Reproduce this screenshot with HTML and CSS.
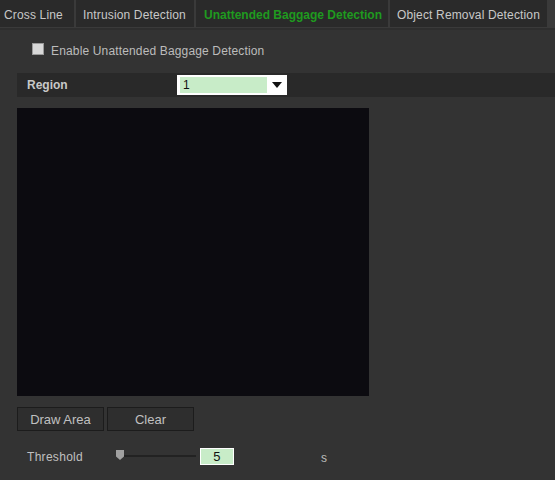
FILE: index.html
```html
<!DOCTYPE html>
<html>
<head>
<meta charset="utf-8">
<link rel="stylesheet" href="styles.css">
</head>
<body>
<div class="tabs">
  <div class="tab t1">Cross Line</div>
  <div class="tab t2">Intrusion Detection</div>
  <div class="tab t3 active">Unattended Baggage Detection</div>
  <div class="tab t4">Object Removal Detection</div>
</div>
<div class="content">
  <label class="enable"><span class="checkbox"></span>Enable Unattended Baggage Detection</label>
  <div class="region-row">
    <span class="region-label">Region</span>
    <div class="select">
      <span class="select-value">1</span>
      <span class="select-arrow"></span>
    </div>
  </div>
  <div class="canvas"></div>
  <div class="buttons">
    <button class="btn">Draw Area</button>
    <button class="btn">Clear</button>
  </div>
  <div class="threshold-row">
    <span class="th-label">Threshold</span>
    <div class="slider">
      <div class="track"></div>
      <div class="handle"></div>
    </div>
    <div class="num">5</div>
    <span class="unit">s</span>
  </div>
</div>
</body>
</html>
```
FILE: styles.css
```css
html, body {
  margin: 0;
  padding: 0;
  background: #333333;
  font-family: "Liberation Sans", Arial, sans-serif;
  font-size: 12px;
  letter-spacing: 0.15px;
  color: #c8c8c8;
  width: 555px;
  height: 480px;
  overflow: hidden;
}
.tabs {
  display: flex;
  gap: 2px;
  height: 30px;
  background: #3a3a3a;
  border-bottom: 2px solid #2e2e2e;
  box-sizing: border-box;
}
.tab {
  background: #2a2a2a;
  line-height: 30px;
  height: 27px;
  color: #c8c8c8;
  font-size: 12px;
  white-space: nowrap;
  box-sizing: border-box;
  overflow: hidden;
}
.t1 { width: 74px; padding-left: 4px; }
.t2 { width: 118px; padding-left: 7px; }
.t3 { width: 192px; padding-left: 8px; }
.t4 { width: 157px; padding-left: 7px; }
.tab.active {
  color: #1f9a1f;
  font-weight: bold;
  letter-spacing: 0;
}
.content {
  padding: 13px 0 0 17px;
}
.enable {
  display: flex;
  align-items: center;
  margin-left: 15px;
  height: 16px;
  color: #bcbcbc;
  font-size: 12px;
}
.checkbox {
  width: 10px;
  height: 10px;
  background: #d8d8d8;
  border: 1px solid #9a9a9a;
  margin-right: 7px;
  margin-top: -4px;
}
.region-row {
  margin-top: 14px;
  height: 24px;
  background: #292929;
  display: flex;
  align-items: center;
}
.region-label {
  font-weight: bold;
  margin-left: 10px;
  width: 150px;
  color: #c8c8c8;
  letter-spacing: 0;
}
.select {
  width: 110px;
  height: 20px;
  background: #ffffff;
  display: flex;
  align-items: center;
  box-sizing: border-box;
  padding: 2px 3px;
}
.select-value {
  flex: none;
  width: 87px;
  height: 16px;
  background: #c8ecc8;
  color: #111;
  line-height: 16px;
  padding-left: 3px;
  box-sizing: border-box;
}
.select-arrow {
  margin-left: 5px;
  width: 0;
  height: 0;
  border-left: 5px solid transparent;
  border-right: 5px solid transparent;
  border-top: 6px solid #111;
}
.canvas {
  margin-top: 11px;
  width: 352px;
  height: 288px;
  background: #0c0b10;
}
.buttons {
  margin-top: 11px;
  display: flex;
  gap: 3px;
}
.btn {
  width: 87px;
  height: 24px;
  background: #2e2e2e;
  border: 1px solid #1c1c1c;
  color: #c0c0c0;
  font-family: "Liberation Sans", Arial, sans-serif;
  font-size: 13px;
  padding: 0;
}
.threshold-row {
  margin-top: 16px;
  display: flex;
  align-items: center;
  height: 18px;
}
.th-label {
  margin-left: 10px;
  width: 89px;
  color: #c0c0c0;
  letter-spacing: 0.3px;
  padding-top: 2px;
}
.slider {
  position: relative;
  width: 80px;
  height: 14px;
}
.track {
  position: absolute;
  left: 4px;
  right: 0;
  top: 6px;
  height: 2px;
  background: #222;
}
.handle {
  position: absolute;
  left: 0;
  top: 1px;
  width: 8px;
  height: 10px;
  background: #a0a0a0;
  clip-path: polygon(0 0, 100% 0, 100% 65%, 50% 100%, 0 65%);
}
.num {
  margin-left: 4px;
  width: 34px;
  height: 17px;
  box-sizing: border-box;
  border: 1px solid #ffffff;
  background: #c8ecc8;
  color: #111;
  text-align: center;
  line-height: 16px;
  font-size: 13px;
}
.unit {
  margin-left: 87px;
  color: #bcbcbc;
  padding-top: 3px;
}
```
